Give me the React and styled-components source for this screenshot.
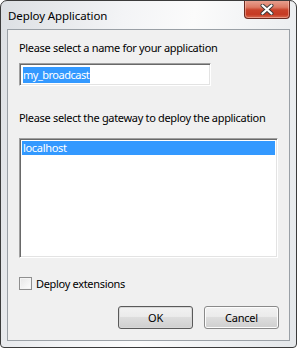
import React from "react";
import styled, { createGlobalStyle } from "styled-components";

const FONT = `"Noto Sans", "Open Sans", sans-serif`;

const Global = createGlobalStyle`
  html, body { margin: 0; padding: 0; background: #ffffff; }
  body { width: 297px; height: 348px; overflow: hidden; }
  * { box-sizing: border-box; }
`;

const Window = styled.div`
  width: 297px;
  height: 348px;
  border: 1px solid #3b3b3b;
  border-radius: 7px 7px 4px 4px;
  background: linear-gradient(100deg, #dcdfe3 0%, #f3f4f6 35%, #fbfbfb 55%, #eef0f2 80%, #e4e7ea 100%);
  padding: 0 6px 6px 6px;
  display: flex;
  flex-direction: column;
  font-family: ${FONT};
  font-size: 11px;
  letter-spacing: -0.32px;
  color: #000;
  overflow: hidden;
`;

const TitleBar = styled.div`
  height: 28px;
  display: flex;
  align-items: flex-start;
  justify-content: space-between;
`;

const Title = styled.div`
  padding: 7px 0 0 1px;
  font-size: 11.5px;
  letter-spacing: -0.1px;
  line-height: 15px;
  color: #000;
`;

const CloseButton = styled.div`
  width: 46px;
  height: 19px;
  margin-top: -1px;
  border: 1px solid #6b2a20;
  border-top: none;
  border-radius: 0 0 4px 4px;
  background: linear-gradient(180deg, #e8a595 0%, #dc7a64 40%, #c9432b 55%, #c63a22 80%, #d76a50 100%);
  box-shadow: inset 0 0 0 1px rgba(255, 210, 200, 0.45);
  display: flex;
  align-items: center;
  justify-content: center;
`;

const Client = styled.div`
  flex: 1;
  border: 1px solid #9aa0a6;
  background: #f0f0f0;
  padding: 0 10px 0 11px;
  display: flex;
  flex-direction: column;
`;

const Label = styled.div`
  line-height: 15px;
  margin-top: ${(p) => p.$top}px;
  color: #000;
  white-space: nowrap;
`;

const Sunken = styled.div`
  border: 1px solid;
  border-color: #a0a0a0 #ffffff #ffffff #a0a0a0;
  box-shadow: inset 1px 1px 0 #696969, inset -1px -1px 0 #e3e3e3;
  background: #ffffff;
  padding: 2px;
`;

const TextInput = styled(Sunken)`
  width: 192px;
  height: 23px;
  margin-top: ${(p) => p.$top}px;
  padding: 2px 3px;
  display: flex;
  align-items: center;
`;

const Selected = styled.span`
  background: #3399ff;
  color: #ffffff;
  line-height: 16px;
  padding-right: 1px;
  letter-spacing: -0.5px;
`;

const ListBox = styled(Sunken)`
  width: 259px;
  height: 120px;
  margin-top: ${(p) => p.$top}px;
`;

const ListRow = styled.div`
  height: 14px;
  line-height: 14px;
  padding-left: 1px;
  background: ${(p) => (p.$selected ? "#3399ff" : "transparent")};
  color: ${(p) => (p.$selected ? "#ffffff" : "#000000")};
`;

const CheckRow = styled.label`
  display: flex;
  align-items: center;
  gap: 4px;
  margin-top: ${(p) => p.$top}px;
  line-height: 15px;
`;

const CheckBox = styled.span`
  width: 13px;
  height: 13px;
  border: 1px solid #8f8f8f;
  background: linear-gradient(135deg, #e6e6e6 0%, #fdfdfd 100%);
  box-shadow: inset 0 0 0 1px #f4f4f4;
  display: inline-block;
`;

const ButtonRow = styled.div`
  display: flex;
  justify-content: flex-end;
  gap: 11px;
  margin-top: ${(p) => p.$top}px;
`;

const Button = styled.button`
  width: 75px;
  height: 23px;
  border: 1px solid ${(p) => (p.$default ? "#5a5a5a" : "#8a8a8a")};
  border-radius: 3px;
  background: linear-gradient(180deg, #f2f2f2 0%, #ebebeb 45%, #dddddd 50%, #cfcfcf 100%);
  box-shadow: inset 0 0 0 1px ${(p) => (p.$default ? "#d8d8d8" : "#fcfcfc")};
  font-family: ${FONT};
  font-size: 11px;
  letter-spacing: -0.2px;
  color: #000;
  padding: 0;
`;

export default function App() {
  return (
    <>
      <Global />
      <Window>
        <TitleBar>
          <Title>Deploy Application</Title>
          <CloseButton>
            <svg width="14" height="11" viewBox="0 0 14 11">
              <path d="M2.5 1.5 L11.5 9.5 M11.5 1.5 L2.5 9.5" stroke="#3a3a3a" strokeWidth="4" strokeLinecap="round" />
              <path d="M2.5 1.5 L11.5 9.5 M11.5 1.5 L2.5 9.5" stroke="#ffffff" strokeWidth="2.2" strokeLinecap="round" />
            </svg>
          </CloseButton>
        </TitleBar>
        <Client>
          <Label $top={10}>Please select a name for your application</Label>
          <TextInput $top={8}>
            <Selected>my_broadcast</Selected>
          </TextInput>
          <Label $top={24}>Please select the gateway to deploy the application</Label>
          <ListBox $top={13}>
            <ListRow $selected>localhost</ListRow>
          </ListBox>
          <CheckRow $top={18}>
            <CheckBox />
            Deploy extensions
          </CheckRow>
          <ButtonRow $top={15}>
            <Button $default>OK</Button>
            <Button>Cancel</Button>
          </ButtonRow>
        </Client>
      </Window>
    </>
  );
}
